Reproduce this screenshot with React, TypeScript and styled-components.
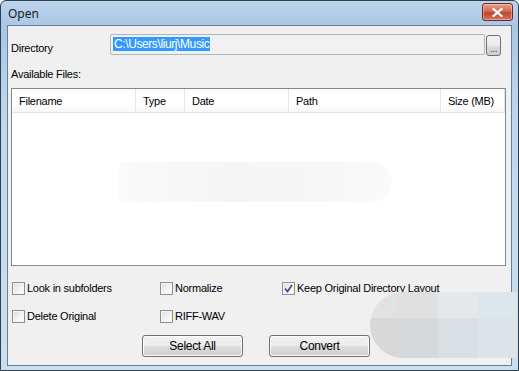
import React from "react"
import styled, { createGlobalStyle } from "styled-components"

const Global = createGlobalStyle`
html, body { margin: 0; padding: 0; background: #fff; }
body { font-family: "Liberation Sans", Arial, sans-serif; font-size: 11px; letter-spacing: -0.25px; color: #000; }
`

const Window = styled.div`
position: relative;
width: 519px;
height: 371px;
box-sizing: border-box;
border: 1px solid #2f3f52;
border-radius: 6px 6px 0 0;
background: linear-gradient(to bottom, #bcd4ec 0px, #a9c6e4 25px, #bfd8ee 120px, #c9e0f0 100%);
display: flex;
flex-direction: column;
padding: 0 6px 4px 6px;
overflow: hidden;
`

const TitleBar = styled.div`
height: 24px;
display: flex;
align-items: center;
justify-content: space-between;
padding-left: 1px;
`

const Title = styled.span`
font-family: "Segoe UI", "Noto Sans", "Liberation Sans", sans-serif;
font-size: 12px;
letter-spacing: 0;
color: #1a1a1a;
`

const CloseButton = styled.div`
width: 29px;
height: 16px;
margin-top: -2px;
margin-right: -1px;
border: 1px solid #6e2a22;
border-radius: 3px;
background: linear-gradient(to bottom, #e7a08e 0%, #d36a55 45%, #c0452f 55%, #d57560 100%);
display: flex;
align-items: center;
justify-content: center;
box-shadow: inset 0 0 0 1px rgba(255,255,255,0.35);
`

const Client = styled.div`
flex: 1;
background: #f0f0f0;
border: 1px solid #6a7f96;
display: flex;
flex-direction: column;
padding: 7px 5px 0 3px;
position: relative;
`

const DirRow = styled.div`
display: flex;
align-items: center;
height: 22px;
`

const Label = styled.span`
width: 99px;
padding-top: 7px;
`

const DirInput = styled.div`
width: 371px;
height: 19px;
border: 1px solid #abb7c4;
border-radius: 2px;
background: #f1f1f1;
display: flex;
align-items: center;
padding-left: 2px;
`

const Selected = styled.span`
background: #3399ff;
color: #fff;
padding: 0 1px;
line-height: 14px;
font-size: 12px;
letter-spacing: -0.4px;
`

const BrowseButton = styled.div`
width: 13px;
height: 19px;
margin-left: 1px;
margin-top: 2px;
border: 1px solid #707070;
border-radius: 3px;
background: linear-gradient(to bottom, #f2f2f2 0%, #ebebeb 50%, #dddddd 51%, #cfcfcf 100%);
font-size: 10px;
display: flex;
align-items: flex-end;
justify-content: center;
line-height: 12px;
color: #333;
`

const FilesLabel = styled.div`
margin-top: 13px;
height: 13px;
`

const List = styled.div`
margin-top: 7px;
width: 493px;
height: 176px;
border: 1px solid #828790;
background: #fff;
`

const Header = styled.div`
display: flex;
height: 23px;
border-bottom: 1px solid #e5e5e5;
background: linear-gradient(to bottom, #ffffff 0%, #ffffff 60%, #f6f7f8 100%);
`

const HeaderCell = styled.div<{ w: number }>`
width: ${p => p.w}px;
box-sizing: border-box;
border-right: 1px solid #e3e5e7;
padding-left: 7px;
display: flex;
align-items: center;
padding-top: 1px;
`

const ListBody = styled.div`
position: relative;
height: 152px;
`

const Smudge = styled.div`
position: absolute;
left: 107px;
top: 49px;
width: 273px;
height: 40px;
border-radius: 8px 30px 30px 6px;
background: linear-gradient(to right, #fafafa, #f5f5f5 40%, #f6f6f6 70%, #fafafa);
`

const CheckGrid = styled.div`
display: grid;
grid-template-columns: 148px 122px auto;
grid-auto-rows: 28px;
margin-top: 15px;
padding-left: 1px;
`

const CheckItem = styled.label`
display: flex;
align-items: center;
gap: 2px;
height: 14px;
`

const Box = styled.span`
width: 11px;
height: 11px;
border: 1px solid #8e8f8f;
background: linear-gradient(135deg, #dcdcdc 0%, #f4f4f4 60%, #ffffff 100%);
box-shadow: inset 0 0 0 1px #f4f4f4;
display: flex;
align-items: center;
justify-content: center;
`

const ButtonRow = styled.div`
display: flex;
gap: 26px;
padding-left: 131px;
margin-top: -2px;
`

const Button = styled.div`
width: 99px;
height: 20px;
border: 1px solid #707070;
border-radius: 3px;
background: linear-gradient(to bottom, #f2f2f2 0%, #ebebeb 50%, #dddddd 51%, #cfcfcf 100%);
box-shadow: inset 0 0 0 1px #fcfcfc;
display: flex;
align-items: center;
justify-content: center;
font-size: 12px;
letter-spacing: -0.3px;
`

const Mosaic = styled.div`
position: absolute;
right: -6px;
bottom: 7px;
width: 147px;
height: 66px;
border-radius: 34px 0 0 34px;
overflow: hidden;
display: grid;
grid-template-columns: 28px 40px 40px 39px;
grid-template-rows: 26px 40px;
`

const Tile = styled.div<{ c: string }>`
background: ${p => p.c};
`

const columns: [string, number][] = [
    ["Filename", 124],
    ["Type", 49],
    ["Date", 104],
    ["Path", 152],
    ["Size (MB)", 64],
]

const Check: React.FC<{ label: string; checked?: boolean }> = ({ label, checked }) => (
    <CheckItem>
        <Box>
            {checked && (
                <svg width="9" height="9" viewBox="0 0 9 9">
                    <path d="M1 4.5 L3.5 7.5 L8 1" stroke="#3c4e8c" strokeWidth="1.7" fill="none" />
                </svg>
            )}
        </Box>
        <span>{label}</span>
    </CheckItem>
)

const mosaic = ["#e2e2e2", "#e0e0e0", "#e4e8ea", "#dde6ea", "#d8d8d8", "#d5d9db", "#d9e0e3", "#dce4e8"]

const App: React.FC = () => {
    return <>
        <Global />
        <Window>
            <TitleBar>
                <Title>Open</Title>
                <CloseButton>
                    <svg width="11" height="9" viewBox="0 0 11 9">
                        <path d="M1.5 1 L9.5 8 M9.5 1 L1.5 8" stroke="#fff" strokeWidth="2.2" strokeLinecap="square" />
                    </svg>
                </CloseButton>
            </TitleBar>
            <Client>
                <DirRow>
                    <Label>Directory</Label>
                    <DirInput><Selected>C:\Users\liurj\Music</Selected></DirInput>
                    <BrowseButton>...</BrowseButton>
                </DirRow>
                <FilesLabel>Available Files:</FilesLabel>
                <List>
                    <Header>
                        {columns.map(([name, w]) => <HeaderCell key={name} w={w}>{name}</HeaderCell>)}
                    </Header>
                    <ListBody><Smudge /></ListBody>
                </List>
                <CheckGrid>
                    <Check label="Look in subfolders" />
                    <Check label="Normalize" />
                    <Check label="Keep Original Directory Layout" checked />
                    <Check label="Delete Original" />
                    <Check label="RIFF-WAV" />
                </CheckGrid>
                <ButtonRow>
                    <Button>Select All</Button>
                    <Button>Convert</Button>
                </ButtonRow>
                <Mosaic>
                    {mosaic.map((c, i) => <Tile key={i} c={c} />)}
                </Mosaic>
            </Client>
        </Window>
    </>
}

export default App
